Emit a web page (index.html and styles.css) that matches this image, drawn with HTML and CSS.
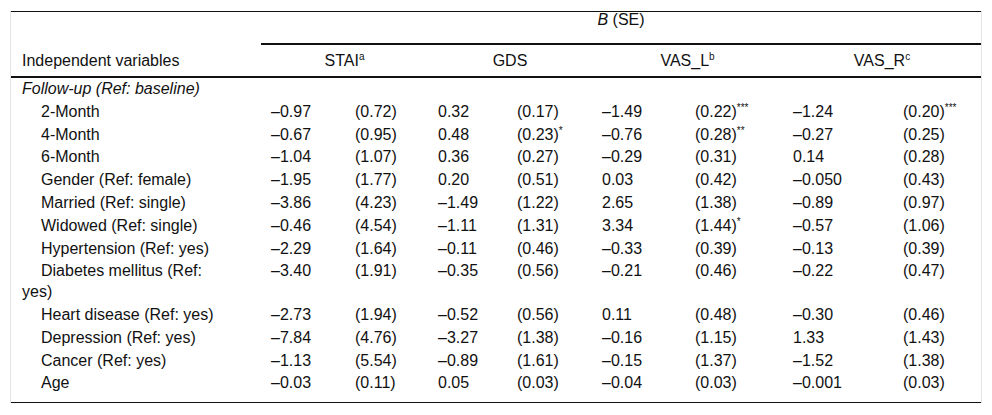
FILE: index.html
```html
<!DOCTYPE html>
<html lang="en">
<head>
<meta charset="utf-8">
<title>Table</title>
<link rel="stylesheet" href="styles.css">
</head>
<body>
<div class="frame">
<table class="tbl">
<colgroup>
<col class="w-stub"><col class="w-a1"><col class="w-a2"><col class="w-b1"><col class="w-b2"><col class="w-c1"><col class="w-c2"><col class="w-d1"><col class="w-d2">
</colgroup>
<thead>
<tr class="h1"><th class="stub"></th><th colspan="8" class="group"><i>B</i> (SE)</th></tr>
<tr class="h2"><th class="stub">Independent variables</th><th colspan="2">STAI<sup>a</sup></th><th colspan="2">GDS</th><th colspan="2">VAS_L<sup>b</sup></th><th colspan="2">VAS_R<sup>c</sup></th></tr>
</thead>
<tbody>
<tr><td class="stub" colspan="9"><i>Follow-up (Ref: baseline)</i></td></tr>
<tr><td class="stub ind">2-Month</td><td>–0.97</td><td>(0.72)</td><td>0.32</td><td>(0.17)</td><td>–1.49</td><td>(0.22)<sup>***</sup></td><td>–1.24</td><td>(0.20)<sup>***</sup></td></tr>
<tr><td class="stub ind">4-Month</td><td>–0.67</td><td>(0.95)</td><td>0.48</td><td>(0.23)<sup>*</sup></td><td>–0.76</td><td>(0.28)<sup>**</sup></td><td>–0.27</td><td>(0.25)</td></tr>
<tr><td class="stub ind">6-Month</td><td>–1.04</td><td>(1.07)</td><td>0.36</td><td>(0.27)</td><td>–0.29</td><td>(0.31)</td><td>0.14</td><td>(0.28)</td></tr>
<tr><td class="stub ind">Gender (Ref: female)</td><td>–1.95</td><td>(1.77)</td><td>0.20</td><td>(0.51)</td><td>0.03</td><td>(0.42)</td><td>–0.050</td><td>(0.43)</td></tr>
<tr><td class="stub ind">Married (Ref: single)</td><td>–3.86</td><td>(4.23)</td><td>–1.49</td><td>(1.22)</td><td>2.65</td><td>(1.38)</td><td>–0.89</td><td>(0.97)</td></tr>
<tr><td class="stub ind">Widowed (Ref: single)</td><td>–0.46</td><td>(4.54)</td><td>–1.11</td><td>(1.31)</td><td>3.34</td><td>(1.44)<sup>*</sup></td><td>–0.57</td><td>(1.06)</td></tr>
<tr><td class="stub ind">Hypertension (Ref: yes)</td><td>–2.29</td><td>(1.64)</td><td>–0.11</td><td>(0.46)</td><td>–0.33</td><td>(0.39)</td><td>–0.13</td><td>(0.39)</td></tr>
<tr><td class="stub ind">Diabetes mellitus (Ref: yes)</td><td>–3.40</td><td>(1.91)</td><td>–0.35</td><td>(0.56)</td><td>–0.21</td><td>(0.46)</td><td>–0.22</td><td>(0.47)</td></tr>
<tr><td class="stub ind">Heart disease (Ref: yes)</td><td>–2.73</td><td>(1.94)</td><td>–0.52</td><td>(0.56)</td><td>0.11</td><td>(0.48)</td><td>–0.30</td><td>(0.46)</td></tr>
<tr><td class="stub ind">Depression (Ref: yes)</td><td>–7.84</td><td>(4.76)</td><td>–3.27</td><td>(1.38)</td><td>–0.16</td><td>(1.15)</td><td>1.33</td><td>(1.43)</td></tr>
<tr><td class="stub ind">Cancer (Ref: yes)</td><td>–1.13</td><td>(5.54)</td><td>–0.89</td><td>(1.61)</td><td>–0.15</td><td>(1.37)</td><td>–1.52</td><td>(1.38)</td></tr>
<tr class="last"><td class="stub ind">Age</td><td>–0.03</td><td>(0.11)</td><td>0.05</td><td>(0.03)</td><td>–0.04</td><td>(0.03)</td><td>–0.001</td><td>(0.03)</td></tr>
</tbody>
</table>
</div>
</body>
</html>
```
FILE: styles.css
```css
html, body {
  margin: 0;
  padding: 0;
  background: #fff;
}

body {
  font-family: "Liberation Sans", Arial, sans-serif;
  font-size: 16px;
  color: #111;
}

.frame {
  margin: 11px 0 0 10px;
  width: 970px;
  border-left: 1px solid #e4e4e4;
  border-right: 1px solid #e4e4e4;
}

.tbl {
  width: 970px;
  table-layout: fixed;
  border-collapse: separate;
  border-spacing: 0;
  border-top: 1px solid #111;
  border-bottom: 1px solid #111;
}

.w-stub { width: 250px; }
.w-a1 { width: 84px; }
.w-a2 { width: 83px; }
.w-b1 { width: 79px; }
.w-b2 { width: 85px; }
.w-c1 { width: 93px; }
.w-c2 { width: 98px; }
.w-d1 { width: 110px; }
.w-d2 { width: 88px; }

th {
  font-weight: normal;
  text-align: center;
  vertical-align: top;
}

.h1 th {
  line-height: 16px;
  padding: 0 10px 15px;
  height: 16px;
}

.h1 th.group {
  border-bottom: 2px solid #111;
}

.h2 th {
  line-height: 21px;
  padding: 5px 10px;
  border-bottom: 2px solid #111;
}

th.stub {
  text-align: left;
  padding-left: 11px;
}

td {
  line-height: 20.8px;
  padding: 1px 10px;
  vertical-align: top;
  text-align: left;
  white-space: nowrap;
}

td.stub {
  padding-left: 11px;
  padding-right: 39px;
  white-space: normal;
}

td.ind {
  text-indent: 19px;
}

.last td {
  padding-bottom: 8px;
}

sup {
  font-size: 10px;
  line-height: 0;
  vertical-align: 6px;
}

td sup {
  font-size: 10px;
  vertical-align: 6px;
}
```
